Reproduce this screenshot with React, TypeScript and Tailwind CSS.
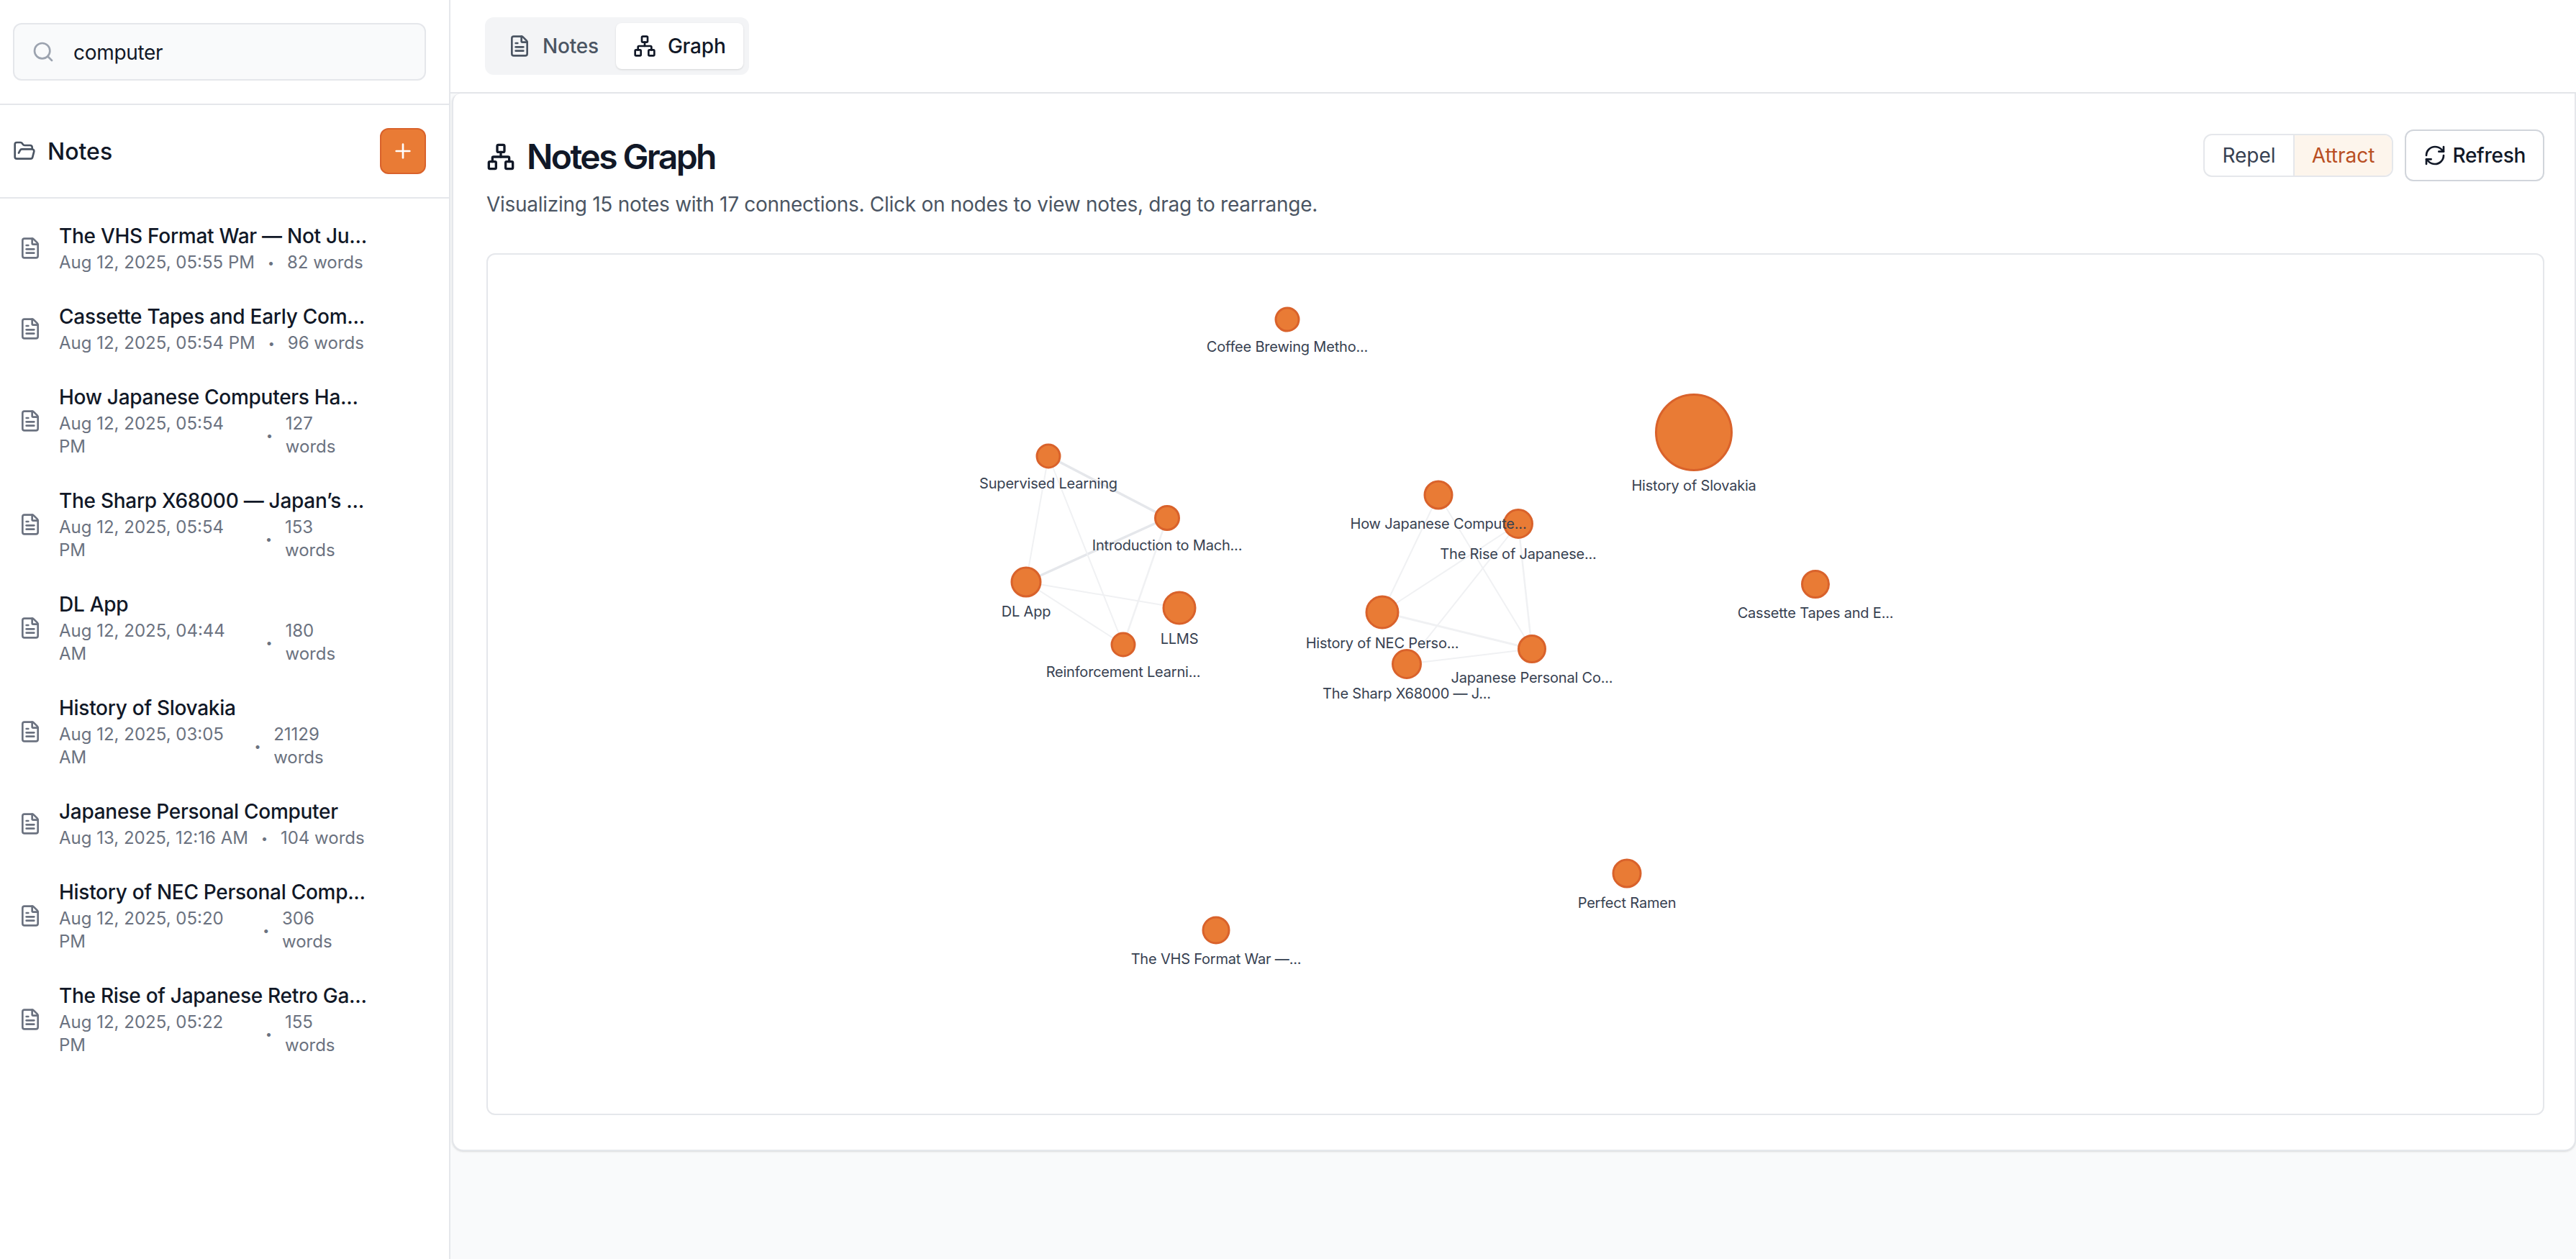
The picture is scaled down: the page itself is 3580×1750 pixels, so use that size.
import { FileText, FolderOpen, Network, Plus, RefreshCw, Search } from "lucide-react";

type Note = { t: string; d: string; w: string };
const notes: Note[] = [
  { t: "The VHS Format War — Not Ju...", d: "Aug 12, 2025, 05:55 PM", w: "82 words" },
  { t: "Cassette Tapes and Early Com...", d: "Aug 12, 2025, 05:54 PM", w: "96 words" },
  { t: "How Japanese Computers Ha...", d: "Aug 12, 2025, 05:54 PM", w: "127 words" },
  { t: "The Sharp X68000 — Japan’s ...", d: "Aug 12, 2025, 05:54 PM", w: "153 words" },
  { t: "DL App", d: "Aug 12, 2025, 04:44 AM", w: "180 words" },
  { t: "History of Slovakia", d: "Aug 12, 2025, 03:05 AM", w: "21129 words" },
  { t: "Japanese Personal Computer", d: "Aug 13, 2025, 12:16 AM", w: "104 words" },
  { t: "History of NEC Personal Comp...", d: "Aug 12, 2025, 05:20 PM", w: "306 words" },
  { t: "The Rise of Japanese Retro Ga...", d: "Aug 12, 2025, 05:22 PM", w: "155 words" },
];

type Node = { id: string; x: number; y: number; r: number; ly: number; label: string };
const nodes: Node[] = [
  { id: "cof", x: 1789, y: 444, r: 17.5, ly: 482, label: "Coffee Brewing Metho..." },
  { id: "slo", x: 2354, y: 601, r: 54, ly: 675, label: "History of Slovakia" },
  { id: "sup", x: 1457, y: 634, r: 17.5, ly: 672, label: "Supervised Learning" },
  { id: "int", x: 1622, y: 720, r: 18, ly: 758, label: "Introduction to Mach..." },
  { id: "dl", x: 1426, y: 809, r: 21.5, ly: 850, label: "DL App" },
  { id: "llm", x: 1639, y: 845, r: 23.5, ly: 888, label: "LLMS" },
  { id: "rei", x: 1561, y: 896, r: 17.5, ly: 934, label: "Reinforcement Learni..." },
  { id: "rise", x: 2110, y: 728, r: 21, ly: 770, label: "The Rise of Japanese..." },
  { id: "how", x: 1999, y: 688, r: 20.5, ly: 728, label: "How Japanese Compute..." },
  { id: "nec", x: 1921, y: 851, r: 23.5, ly: 894, label: "History of NEC Perso..." },
  { id: "sha", x: 1955, y: 923, r: 21, ly: 964, label: "The Sharp X68000 — J..." },
  { id: "jpc", x: 2129, y: 902, r: 20, ly: 942, label: "Japanese Personal Co..." },
  { id: "cas", x: 2523, y: 812, r: 20, ly: 852, label: "Cassette Tapes and E..." },
  { id: "ram", x: 2261, y: 1214, r: 20.5, ly: 1255, label: "Perfect Ramen" },
  { id: "vhs", x: 1690, y: 1293, r: 19.5, ly: 1333, label: "The VHS Format War —..." },
];

const edges: [string, string, number, string][] = [
  ["sup", "int", 3.5, "#e5e7eb"],
  ["int", "dl", 3.5, "#e5e7eb"],
  ["sup", "dl", 2, "#f0f1f3"],
  ["sup", "rei", 2, "#f0f1f3"],
  ["int", "rei", 2.5, "#f0f1f3"],
  ["dl", "llm", 2, "#f0f1f3"],
  ["dl", "rei", 2, "#f0f1f3"],
  ["how", "nec", 2, "#f0f1f3"],
  ["how", "jpc", 2, "#f0f1f3"],
  ["rise", "nec", 2, "#f0f1f3"],
  ["rise", "sha", 2, "#f0f1f3"],
  ["rise", "jpc", 2.5, "#f0f1f3"],
  ["nec", "jpc", 3, "#f0f1f3"],
  ["sha", "jpc", 2, "#f0f1f3"],
];

const at = (id: string) => nodes.find((n) => n.id === id) as Node;

function Graph() {
  return (
    <svg className="block h-full w-full" viewBox="678 354 2856 1194">
      {edges.map(([a, b, w, c]) => (
        <line key={a + b} x1={at(a).x} y1={at(a).y} x2={at(b).x} y2={at(b).y} stroke={c} strokeWidth={w} />
      ))}
      {nodes.map((n) => (
        <g key={n.id}>
          <circle cx={n.x} cy={n.y} r={n.r - 1.5} fill="#e97b35" stroke="#d9622b" strokeWidth={3} />
          <text
            x={n.x}
            y={n.ly + 7}
            textAnchor="middle"
            fontSize={20}
            fill="#374151"
            fontFamily="Inter, sans-serif"
            className="tracking-[-0.2px]"
          >
            {n.label}
          </text>
        </g>
      ))}
    </svg>
  );
}

export default function App() {
  return (
    <div className="flex h-[1750px] w-[3580px] overflow-hidden bg-white font-['Inter',sans-serif] text-[#111827]">
      <aside className="flex w-[626px] shrink-0 flex-col border-r-2 border-[#e5e7eb] bg-white">
        <div className="border-b-2 border-[#e5e7eb] pb-8 pl-[18px] pr-8 pt-8">
          <div className="flex h-20 items-center gap-[26px] rounded-xl border-2 border-[#e5e7eb] bg-[#f9fafb] pl-6">
            <Search className="size-8 text-[#9ca3af]" strokeWidth={2} />
            <span className="pt-0.5 text-[28px] leading-10 tracking-[-0.3px]">computer</span>
          </div>
        </div>
        <div className="flex items-center justify-between border-b-2 border-[#e5e7eb] py-8 pl-[18px] pr-8">
          <div className="flex items-center gap-4">
            <FolderOpen className="size-8 text-[#4b5563]" />
            <span className="pt-0.5 text-[32px] font-medium leading-10">Notes</span>
          </div>
          <div className="flex size-16 items-center justify-center rounded-xl border-2 border-[#d9622b] bg-[#e97b35] text-white">
            <Plus className="size-8" />
          </div>
        </div>
        <div className="flex flex-col pt-3">
          {notes.map((n) => (
            <div key={n.t} className="flex items-center gap-6 pb-[19px] pl-[26px] pt-5">
              <FileText className="size-8 shrink-0 text-[#6b7280]" />
              <div className="w-[428px]">
                <div className="whitespace-nowrap text-[28px] font-medium leading-10 tracking-[-0.28px]">{n.t}</div>
                <div className="mt-px flex items-center gap-4 text-2xl leading-8 text-[#6b7280]">
                  <span>{n.d}</span>
                  <span className="w-[13px] text-center text-base">•</span>
                  <span>{n.w}</span>
                </div>
              </div>
            </div>
          ))}
        </div>
      </aside>
      <main className="flex min-w-0 flex-1 flex-col bg-[#f9fafb]">
        <header className="flex h-[130px] shrink-0 items-start border-b-2 border-[#e5e7eb] bg-white pl-12 pt-6">
          <div className="flex h-20 items-center rounded-xl bg-[#f3f4f6] p-2">
            <div className="flex h-16 items-center gap-4 px-6 text-[28px] font-medium tracking-[-0.2px] text-[#4b5563]">
              <FileText className="size-8" />
              Notes
            </div>
            <div className="flex h-16 items-center gap-4 rounded-lg bg-white px-6 text-[28px] font-medium tracking-[-0.2px] shadow-sm">
              <Network className="size-8" />
              Graph
            </div>
          </div>
        </header>
        <section className="ml-0.5 h-[1470px] rounded-b-2xl rounded-tl-xl border-2 border-t-0 border-[#e5e7eb] bg-white pl-[46px] pr-[42px] pt-[50px] shadow-sm">
          <div className="flex items-start justify-between">
            <div className="pt-3.5">
              <div className="flex h-10 items-center gap-4 pt-2">
                <Network className="size-10" />
                <h1 className="text-[48px] font-semibold leading-10 tracking-[-2.6px]">Notes Graph</h1>
              </div>
              <p className="mt-[30px] text-[28px] leading-10 tracking-[-0.28px] text-[#4b5563]">
                Visualizing 15 notes with 17 connections. Click on nodes to view notes, drag to rearrange.
              </p>
            </div>
            <div className="flex items-center gap-4">
              <div className="flex h-[60px] overflow-hidden rounded-xl border-2 border-[#e5e7eb] text-[28px]">
                <div className="flex items-center px-6 text-[#374151]">Repel</div>
                <div className="flex items-center border-l-2 border-[#e5e7eb] bg-[#fdf5ec] px-6 text-[#b94f23]">Attract</div>
              </div>
              <div className="flex h-[72px] items-center gap-2 rounded-xl border-2 border-[#d1d5db] px-6 text-[28px] font-medium tracking-[-0.28px]">
                <RefreshCw className="size-8" />
                Refresh
              </div>
            </div>
          </div>
          <div className="mt-12 h-[1198px] overflow-hidden rounded-xl border-2 border-[#e5e7eb] bg-white">
            <Graph />
          </div>
        </section>
      </main>
    </div>
  );
}
